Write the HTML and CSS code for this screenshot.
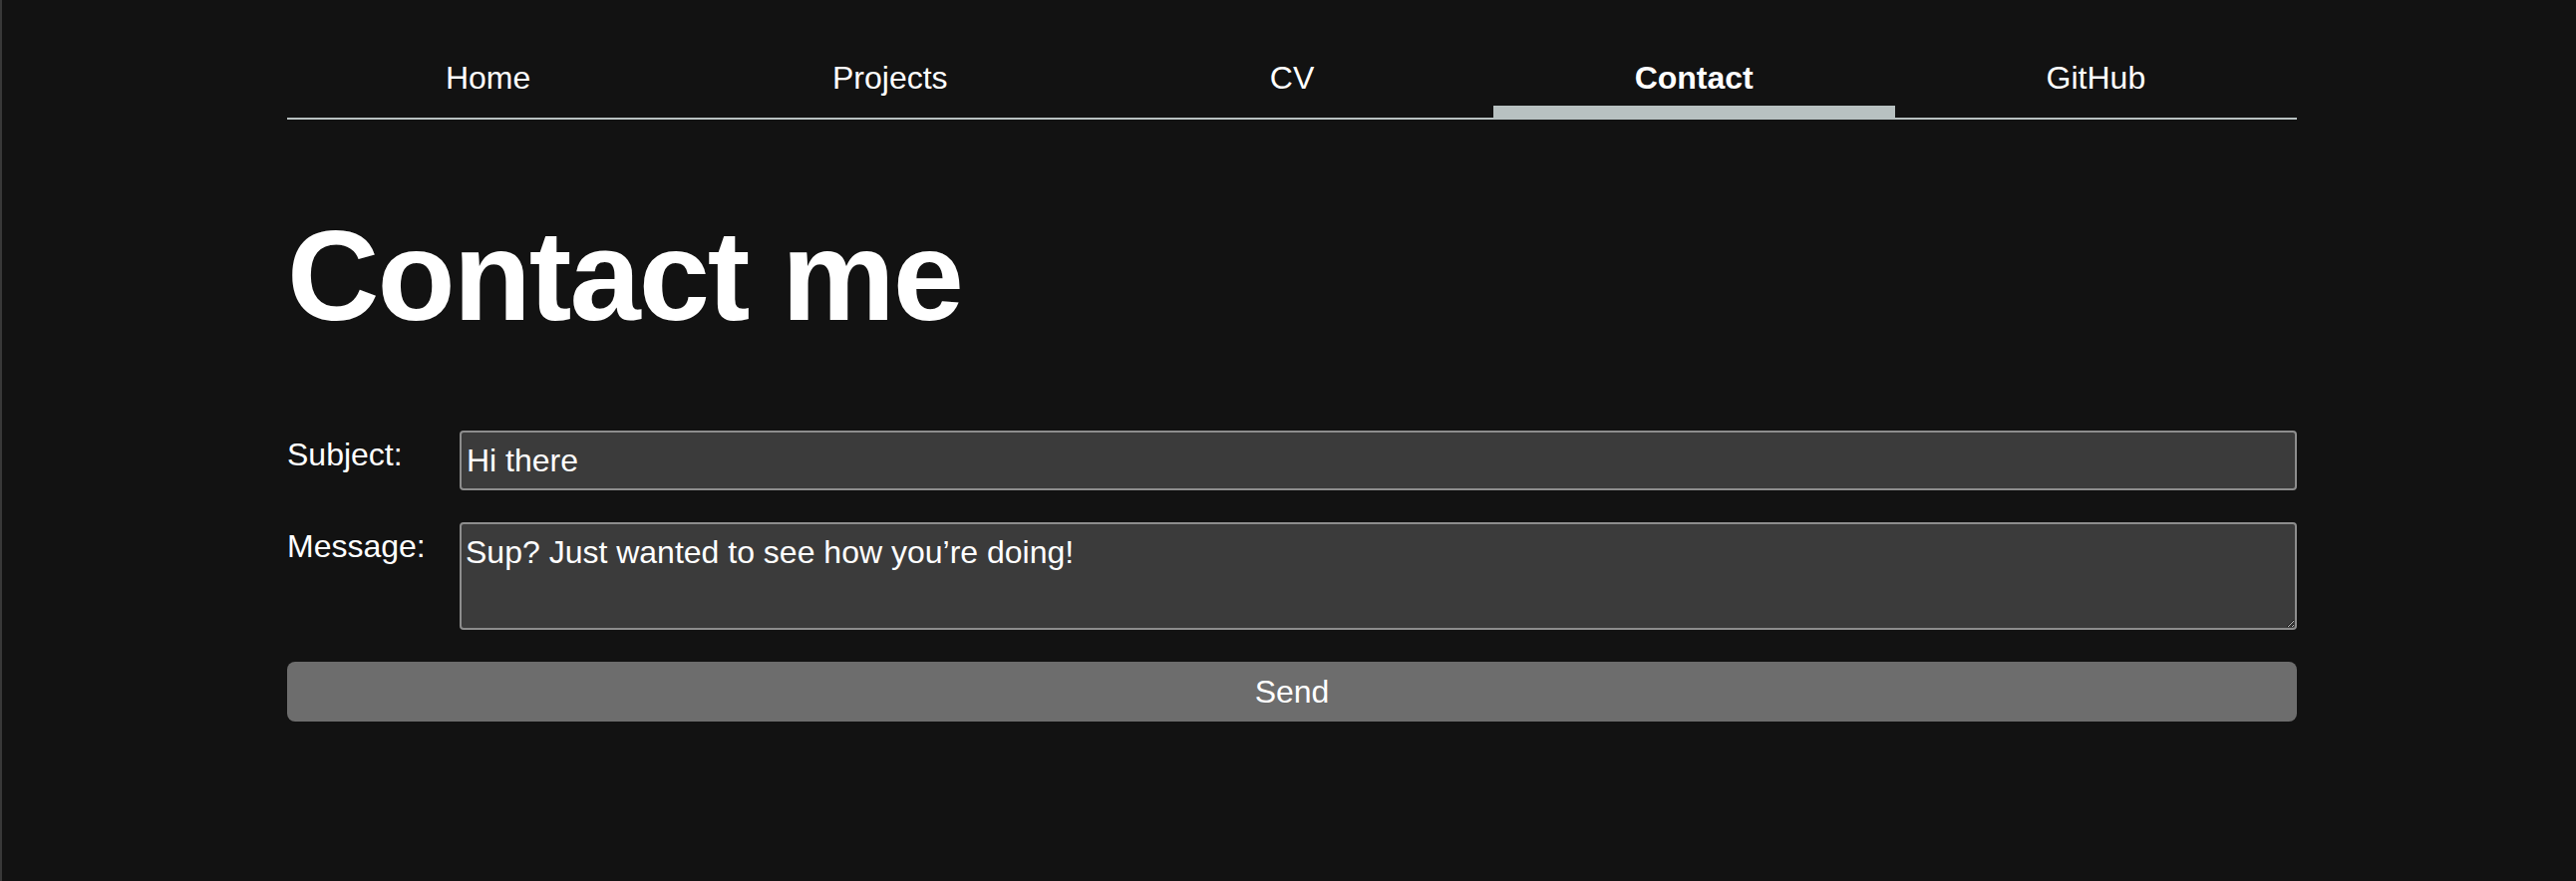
FILE: index.html
```html
<!DOCTYPE html>
<html lang="en">
<head>
<meta charset="utf-8">
<title>Contact me</title>
<link rel="stylesheet" href="styles.css">
</head>
<body>
<div class="page">
  <nav class="nav">
    <a class="nav-item" href="#">Home</a>
    <a class="nav-item" href="#">Projects</a>
    <a class="nav-item" href="#">CV</a>
    <a class="nav-item active" href="#">Contact</a>
    <a class="nav-item" href="#">GitHub</a>
  </nav>
  <h1 class="title">Contact me</h1>
  <form class="form">
    <label class="label" for="subject">Subject:</label>
    <input class="field" id="subject" type="text" value="Hi there">
    <label class="label" for="message">Message:</label>
    <textarea class="field area" id="message">Sup? Just wanted to see how you’re doing!</textarea>
    <button class="send" type="button">Send</button>
  </form>
</div>
</body>
</html>
```

FILE: styles.css
```css
html, body {
  height: 100%;
}
body {
  margin: 0;
  background: #121212;
  border-left: 2px solid #383838;
  padding-left: 6px;
  box-sizing: border-box;
  color: #ffffff;
  font-family: "Liberation Sans", Arial, sans-serif;
  font-size: 32px;
}
.page {
  width: 2016px;
  margin: 0 auto;
}
.nav {
  display: grid;
  grid-template-columns: repeat(5, 1fr);
  border-bottom: 2px solid #b8c1c1;
}
.nav-item {
  display: block;
  text-align: center;
  color: #ffffff;
  text-decoration: none;
  line-height: 40px;
  padding: 58px 0 20px;
}
.nav-item.active {
  font-weight: bold;
  box-shadow: inset 0 -12px 0 #b8c1c1;
}
.title {
  margin: 82px 0 0;
  font-size: 128px;
  line-height: 150px;
  font-weight: bold;
  letter-spacing: -2px;
}
.form {
  margin-top: 80px;
  display: grid;
  grid-template-columns: 173px 1fr;
  row-gap: 32px;
}
.label {
  padding-top: 6px;
  line-height: normal;
}
.field {
  box-sizing: border-box;
  margin: 0;
  height: 60px;
  background: #3b3b3b;
  border: 2px solid #8d8d8d;
  border-radius: 4px;
  color: #ffffff;
  font-family: "Liberation Sans", Arial, sans-serif;
  font-size: 32px;
  padding: 0 5px;
  outline: none;
}
.area {
  height: 108px;
  padding: 10px 4px;
  resize: vertical;
  line-height: normal;
}
.send {
  grid-column: 1 / -1;
  height: 60px;
  margin: 0;
  border: none;
  border-radius: 8px;
  background: #6d6d6d;
  color: #ffffff;
  font-family: "Liberation Sans", Arial, sans-serif;
  font-size: 32px;
}
```
